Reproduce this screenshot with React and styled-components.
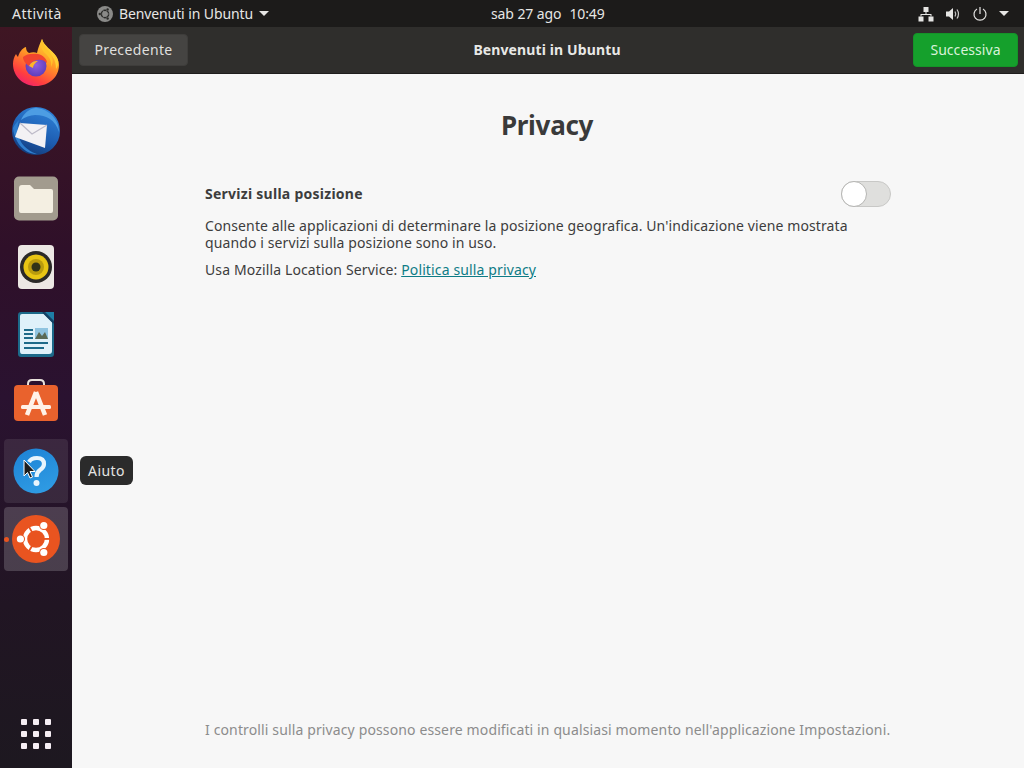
import React from "react";
import styled, { createGlobalStyle } from "styled-components";

const GlobalStyle = createGlobalStyle`
  html, body {
    margin: 0;
    height: 100%;
    overflow: hidden;
  }
  body {
    font-family: "Noto Sans", "Open Sans", sans-serif;
    font-size: 14px;
  }
`;

const Screen = styled.div`
  display: flex;
  flex-direction: column;
  width: 1024px;
  height: 768px;
  overflow: hidden;
`;

const TopBar = styled.div`
  display: grid;
  grid-template-columns: 491px auto 1fr;
  align-items: center;
  height: 27px;
  flex: none;
  background: #1c1b1a;
  color: #e6e6e4;
  font-size: 14px;
`;

const TopLeft = styled.div`
  display: flex;
  align-items: center;
`;

const Activities = styled.span`
  margin-left: 12px;
  letter-spacing: 0.45px;
`;

const AppMenu = styled.div`
  display: flex;
  align-items: center;
  margin-left: 35px;
  gap: 6px;
  letter-spacing: -0.1px;
`;

const Clock = styled.div`
  display: flex;
  gap: 8px;
  letter-spacing: -0.1px;
`;

const TopRight = styled.div`
  display: flex;
  align-items: center;
  justify-content: flex-end;
  gap: 11px;
  padding-right: 15px;
`;

const Caret = styled.span`
  display: block;
  width: 0;
  height: 0;
  border-left: 5px solid transparent;
  border-right: 5px solid transparent;
  border-top: 5px solid #e6e6e4;
`;

const Body = styled.div`
  display: flex;
  flex: 1;
  min-height: 0;
`;

const Dock = styled.div`
  position: relative;
  display: flex;
  flex-direction: column;
  align-items: center;
  gap: 4px;
  width: 72px;
  flex: none;
  padding: 4px 0 2px;
  box-sizing: border-box;
  background: linear-gradient(180deg, #3f1623 0%, #2f1029 30%, #2a1230 50%, #211523 78%, #1d1820 100%);
`;

const DockTile = styled.div`
  position: relative;
  display: flex;
  align-items: center;
  justify-content: center;
  width: 64px;
  height: 64px;
  flex: none;
  border-radius: 4px;
  background: ${(p) => p.$bg || "transparent"};
  ${(p) => p.$bottom && "margin-top: auto;"}
`;

const RunningDot = styled.span`
  position: absolute;
  left: -0.5px;
  top: 29.5px;
  width: 5px;
  height: 5px;
  border-radius: 50%;
  background: #e95420;
`;

const Pointer = styled.svg`
  position: absolute;
  left: 19px;
  top: 20px;
`;

const AppsGrid = styled.div`
  display: grid;
  grid-template-columns: repeat(3, 6px);
  grid-auto-rows: 6px;
  gap: 6px;
`;

const AppsDot = styled.span`
  background: #f6eef4;
  border-radius: 1px;
`;

const Tooltip = styled.div`
  position: absolute;
  left: 80px;
  top: 429px;
  display: flex;
  align-items: center;
  height: 29px;
  padding: 0 8px;
  border-radius: 6px;
  background: #2b2b2b;
  color: #e4e4e2;
  font-size: 14px;
  letter-spacing: 0.45px;
`;

const Window = styled.div`
  display: flex;
  flex-direction: column;
  flex: 1;
  min-width: 0;
`;

const HeaderBar = styled.div`
  display: flex;
  align-items: center;
  justify-content: space-between;
  position: relative;
  height: 47px;
  flex: none;
  padding: 0 6px 1px 7px;
  box-sizing: border-box;
  background: #2f2e2c;
  border-bottom: 1px solid #1f1e1d;
`;

const HeaderTitle = styled.div`
  position: absolute;
  left: 0;
  right: 0;
  padding-right: 2px;
  text-align: center;
  color: #e8e8e6;
  font-size: 14px;
  font-weight: 700;
  letter-spacing: 0.12px;
`;

const HeaderButton = styled.div`
  display: flex;
  align-items: center;
  justify-content: center;
  height: ${(p) => (p.$primary ? "34px" : "32px")};
  width: ${(p) => (p.$primary ? "105px" : "109px")};
  border-radius: 4px;
  font-size: 14px;
  letter-spacing: ${(p) => (p.$primary ? "0.05px" : "0.35px")};
  color: ${(p) => (p.$primary ? "#d9f2d9" : "#dfdfdd")};
  background: ${(p) => (p.$primary ? "#15a02c" : "#454442")};
  border: 1px solid ${(p) => (p.$primary ? "#149428" : "#3e3d3b")};
  box-sizing: border-box;
`;

const Content = styled.div`
  display: flex;
  flex-direction: column;
  align-items: center;
  flex: 1;
  min-height: 0;
  background: #f7f7f7;
  color: #3d3d3d;
`;

const Title = styled.h1`
  margin: 32px 2px 0 0;
  font-size: 26px;
  line-height: 38px;
  font-weight: 700;
  letter-spacing: -0.3px;
  color: #3a3a3a;
`;

const Column = styled.div`
  display: flex;
  flex-direction: column;
  flex: 1;
  width: 686px;
`;

const SettingRow = styled.div`
  display: flex;
  align-items: center;
  justify-content: space-between;
  margin-top: 37px;
  height: 26px;
`;

const SettingName = styled.span`
  padding-bottom: 2px;
  font-size: 14px;
  font-weight: 700;
  letter-spacing: 0.26px;
`;

const Toggle = styled.div`
  position: relative;
  width: 50px;
  height: 26px;
  box-sizing: border-box;
  border-radius: 13px;
  border: 1px solid #c8c8c6;
  background: #dfdfdd;
`;

const Knob = styled.span`
  position: absolute;
  left: -1px;
  top: -1px;
  width: 26px;
  height: 26px;
  box-sizing: border-box;
  border-radius: 50%;
  border: 1px solid #b5b5b3;
  background: #fff;
`;

const Paragraph = styled.p`
  margin: 10px 0 0;
  max-width: 655px;
  font-size: 14px;
  line-height: 17px;
  letter-spacing: ${(p) => p.$spacing}px;
`;

const PolicyLink = styled.a`
  color: #0e7c86;
  text-decoration: underline;
`;

const Footer = styled.p`
  margin: auto 0 30px;
  font-size: 14px;
  line-height: 17px;
  letter-spacing: 0.13px;
  color: #8c8c8c;
  white-space: nowrap;
`;

const UbuntuGlyph = ({ size = 48, bg = "#e95420", fg = "#fff" }) => (
  <svg width={size} height={size} viewBox="0 0 48 48">
    <circle cx="24" cy="24" r="24" fill={bg} />
    <circle cx="24" cy="24" r="11" fill="none" stroke={fg} strokeWidth="4.4" />
    <path d="M24 24 L8 24 M24 24 L32 10 M24 24 L32 38" stroke={bg} strokeWidth="1.8" transform="rotate(60 24 24)" />
    <circle cx="8.4" cy="24" r="4.6" fill={bg} />
    <circle cx="31.8" cy="10.500" r="4.6" fill={bg} />
    <circle cx="31.8" cy="37.500" r="4.6" fill={bg} />
    <circle cx="8.4" cy="24" r="3.6" fill={fg} />
    <circle cx="31.8" cy="10.500" r="3.6" fill={fg} />
    <circle cx="31.8" cy="37.500" r="3.6" fill={fg} />
  </svg>
);

const FirefoxIcon = () => (
  <svg width="48" height="48" viewBox="0 0 48 48">
    <defs>
      <linearGradient id="ffA" x1="0.8" y1="0.05" x2="0.3" y2="1">
        <stop offset="0" stopColor="#ffd43a" />
        <stop offset="0.4" stopColor="#ff9a25" />
        <stop offset="0.8" stopColor="#ff3f3f" />
        <stop offset="1" stopColor="#f0226c" />
      </linearGradient>
      <radialGradient id="ffB" cx="0.5" cy="0.45" r="0.6">
        <stop offset="0" stopColor="#8f5fe0" />
        <stop offset="1" stopColor="#5a3bb8" />
      </radialGradient>
    </defs>
    <path
      d="M24 47 C11 47 1 37 1 25 C1 21 2 18 4 15 C4.500 16 5 17 6 18 C7 14 10 9 14 8 C14 11 15 13 17 14 C20 13 23 13 25 14 C26 9 28 4 30 0 C31 5 35 8 39 12 C44 16 47 21 47 26 C47 38 37 47 24 47 Z"
      fill="url(#ffA)"
    />
    <path d="M30 0 C30 7 35 11 39 16 C43 20 44 25 44 30 C47 26 47 21 44 17 C40 11 32 7 30 0 Z" fill="#ffce33" />
    <path d="M30 0 C28 6 29 11 34 15 C38 19 40 23 39 28 C42 23 41 17 37 12 C33 8 31 5 30 0 Z" fill="#ffc22a" />
    <circle cx="24" cy="27" r="10.500" fill="url(#ffB)" />
    <path d="M11 18 C14 15 20 14 26 15 C31 16 35 20 35 24 C32 21 29 20 25 21 C21 22 18 24 17 27 C14 25 11 22 11 18 Z" fill="#f2452f" />
    <path d="M17 27 C19 23 22 22 26 22 C23 24 21 26 21 29 Z" fill="#ffb627" />
  </svg>
);

const ThunderbirdIcon = () => (
  <svg width="50" height="50" viewBox="0 0 50 50">
    <defs>
      <linearGradient id="tbA" x1="0.7" y1="0" x2="0.3" y2="1">
        <stop offset="0" stopColor="#2f82d8" />
        <stop offset="0.6" stopColor="#1d5cb0" />
        <stop offset="1" stopColor="#123a78" />
      </linearGradient>
    </defs>
    <circle cx="25" cy="25" r="24" fill="url(#tbA)" />
    <path d="M24 2 C36 2 48 12 48 26 C44 14 36 9 24 9 C19 9.500 14 11 10 14 C13 7 18 3 24 2 Z" fill="#4d9de3" />
    <path d="M2 22 C4 18 6 16 8 14 C6 20 6 28 10 36 C14 42 20 46 26 48 C14 48 4 38 2 22 Z" fill="#2f7fd0" />
    <path d="M9 17 L36 19 L34 42 L4 31 Z" fill="#f3f1f4" />
    <path d="M9 17 L21 28 L36 19" fill="none" stroke="#bdbac8" strokeWidth="1.2" />
  </svg>
);

const FilesIcon = () => (
  <svg width="46" height="46" viewBox="0 0 46 46">
    <rect x="1" y="0.500" width="44" height="44" rx="5" fill="#a29b8e" />
    <path d="M6 12 Q6 9 9 9 L17 9 L21 13 L38 13 Q40 13 40 15 L40 35 Q40 37 38 37 L8 37 Q6 37 6 35 Z" fill="#f4efe2" />
  </svg>
);

const RhythmboxIcon = () => (
  <svg width="46" height="46" viewBox="0 0 46 46">
    <rect x="5" y="1" width="36" height="44" rx="4" fill="#ece8e4" />
    <circle cx="23" cy="23" r="16" fill="#2b2a28" />
    <circle cx="23" cy="23" r="12.500" fill="#e8c514" />
    <circle cx="23" cy="23" r="8" fill="#b99b0e" />
    <circle cx="23" cy="23" r="4.500" fill="#2f3318" />
  </svg>
);

const WriterIcon = () => (
  <svg width="36" height="46" viewBox="0 0 36 46">
    <path d="M3 0 L27 0 L36 9 L36 42 Q36 45 33 45 L3 45 Q0 45 0 42 L0 3 Q0 0 3 0 Z" fill="#1c6a8a" />
    <path d="M4 2 L26 2 L34 10 L34 39 Q34 42 31 42 L4 42 Q2 42 2 39 L2 4 Q2 2 4 2 Z" fill="#dff1fa" />
    <path d="M27 0 L36 0 L36 9 Z" fill="#1e7ea6" />
    <path d="M25 0 L36 11" stroke="#123f63" strokeWidth="2" />
    <rect x="6" y="17" width="9" height="2" fill="#1c6a8a" />
    <rect x="6" y="21" width="9" height="2" fill="#1c6a8a" />
    <rect x="6" y="25" width="9" height="2" fill="#1c6a8a" />
    <rect x="6" y="30" width="24" height="2" fill="#1c6a8a" />
    <rect x="6" y="35" width="20" height="2" fill="#1c6a8a" />
    <rect x="17" y="16" width="13" height="11" fill="#8fc4e0" />
    <path d="M17 27 L21 20 L24 24 L27 20 L30 27 Z" fill="#5a6a55" />
  </svg>
);

const StoreIcon = () => (
  <svg width="46" height="48" viewBox="0 0 46 48">
    <path d="M15 7 L15 5 Q15 1 19 1 L27 1 Q31 1 31 5 L31 7" fill="none" stroke="#e8e2dc" strokeWidth="2" />
    <path d="M5 6 L41 6 Q45 6 45 10 L45 38 Q45 42 41 42 L5 42 Q1 42 1 38 L1 10 Q1 6 5 6 Z" fill="#e9622d" />
    <path d="M23 13 L32 36 M23 13 L14 36" stroke="#fff2e8" strokeWidth="4.500" />
    <rect x="8" y="26" width="30" height="4" rx="1.500" fill="#fff2e8" />
  </svg>
);

const HelpIcon = () => (
  <svg width="46" height="46" viewBox="0 0 46 46">
    <defs>
      <linearGradient id="hlA" x1="0.3" y1="0" x2="0.7" y2="1">
        <stop offset="0" stopColor="#1f84d6" />
        <stop offset="1" stopColor="#2f9ce4" />
      </linearGradient>
    </defs>
    <circle cx="23" cy="23" r="22.500" fill="url(#hlA)" />
    <path d="M16 14 Q18 10 24 10 Q31 10 31 16 Q31 19.500 27 22 Q23.500 24.500 23.500 29" fill="none" stroke="#e8f4fc" strokeWidth="4.200" />
    <circle cx="23.500" cy="35" r="3" fill="#e8f4fc" />
  </svg>
);

const NetworkIcon = () => (
  <svg width="16" height="16" viewBox="0 0 16 16" fill="#e6e6e4">
    <rect x="5.500" y="1" width="5" height="5" />
    <rect x="0.500" y="10.500" width="5" height="5" />
    <rect x="10.500" y="10.500" width="5" height="5" />
    <path d="M7.500 6 H8.500 V8 H13.500 V10.500 H12.500 V9 H3.500 V10.500 H2.500 V8 H7.500 Z" />
  </svg>
);

const VolumeIcon = () => (
  <svg width="16" height="16" viewBox="0 0 16 16">
    <path d="M1 5.500 H4 L8 2 V14 L4 10.500 H1 Z" fill="#e6e6e4" />
    <path d="M10 5.500 Q11.500 8 10 10.500" fill="none" stroke="#c8c8c6" strokeWidth="1.2" />
    <path d="M12 3.500 Q15 8 12 12.500" fill="none" stroke="#c8c8c6" strokeWidth="1.2" />
  </svg>
);

const PowerIcon = () => (
  <svg width="16" height="16" viewBox="0 0 16 16" fill="none" stroke="#e6e6e4" strokeWidth="1.200">
    <path d="M5 3 A6 6 0 1 0 11 3" />
    <path d="M8 1 V8" />
  </svg>
);

const dockApps = [
  { key: "firefox", icon: <FirefoxIcon /> },
  { key: "thunderbird", icon: <ThunderbirdIcon /> },
  { key: "files", icon: <FilesIcon /> },
  { key: "rhythmbox", icon: <RhythmboxIcon /> },
  { key: "writer", icon: <WriterIcon /> },
  { key: "store", icon: <StoreIcon /> },
];

export default function App() {
  return (
    <Screen>
      <GlobalStyle />
      <TopBar>
        <TopLeft>
          <Activities>Attività</Activities>
          <AppMenu>
            <UbuntuGlyph size={16} bg="#8a8a88" fg="#2a2a28" />
            <span>Benvenuti in Ubuntu</span>
            <Caret />
          </AppMenu>
        </TopLeft>
        <Clock>
          <span>sab 27 ago</span>
          <span>10:49</span>
        </Clock>
        <TopRight>
          <NetworkIcon />
          <VolumeIcon />
          <PowerIcon />
          <Caret />
        </TopRight>
      </TopBar>
      <Body>
        <Dock>
          {dockApps.map((app) => (
            <DockTile key={app.key}>{app.icon}</DockTile>
          ))}
          <DockTile $bg="rgba(255,255,255,0.09)">
            <HelpIcon />
            <Pointer width="14" height="22" viewBox="0 0 14 22">
              <path d="M1 1 L1 17 L4.500 13.500 L7 19 L9.500 18 L7 12.500 L12 12.500 Z" fill="#1c1c1c" stroke="#fff" strokeWidth="1" />
            </Pointer>
          </DockTile>
          <DockTile $bg="rgba(255,255,255,0.18)">
            <UbuntuGlyph />
            <RunningDot />
          </DockTile>
          <DockTile $bottom>
            <AppsGrid>
              {Array.from({ length: 9 }, (_, i) => (
                <AppsDot key={i} />
              ))}
            </AppsGrid>
          </DockTile>
          <Tooltip>Aiuto</Tooltip>
        </Dock>
        <Window>
          <HeaderBar>
            <HeaderButton>Precedente</HeaderButton>
            <HeaderTitle>Benvenuti in Ubuntu</HeaderTitle>
            <HeaderButton $primary>Successiva</HeaderButton>
          </HeaderBar>
          <Content>
            <Title>Privacy</Title>
            <Column>
              <SettingRow>
                <SettingName>Servizi sulla posizione</SettingName>
                <Toggle>
                  <Knob />
                </Toggle>
              </SettingRow>
              <Paragraph $spacing={0.11}>
                Consente alle applicazioni di determinare la posizione geografica. Un'indicazione viene mostrata
                quando i servizi sulla posizione sono in uso.
              </Paragraph>
              <Paragraph $spacing={0.13}>
                Usa Mozilla Location Service: <PolicyLink href="#">Politica sulla privacy</PolicyLink>
              </Paragraph>
              <Footer>I controlli sulla privacy possono essere modificati in qualsiasi momento nell'applicazione Impostazioni.</Footer>
            </Column>
          </Content>
        </Window>
      </Body>
    </Screen>
  );
}
